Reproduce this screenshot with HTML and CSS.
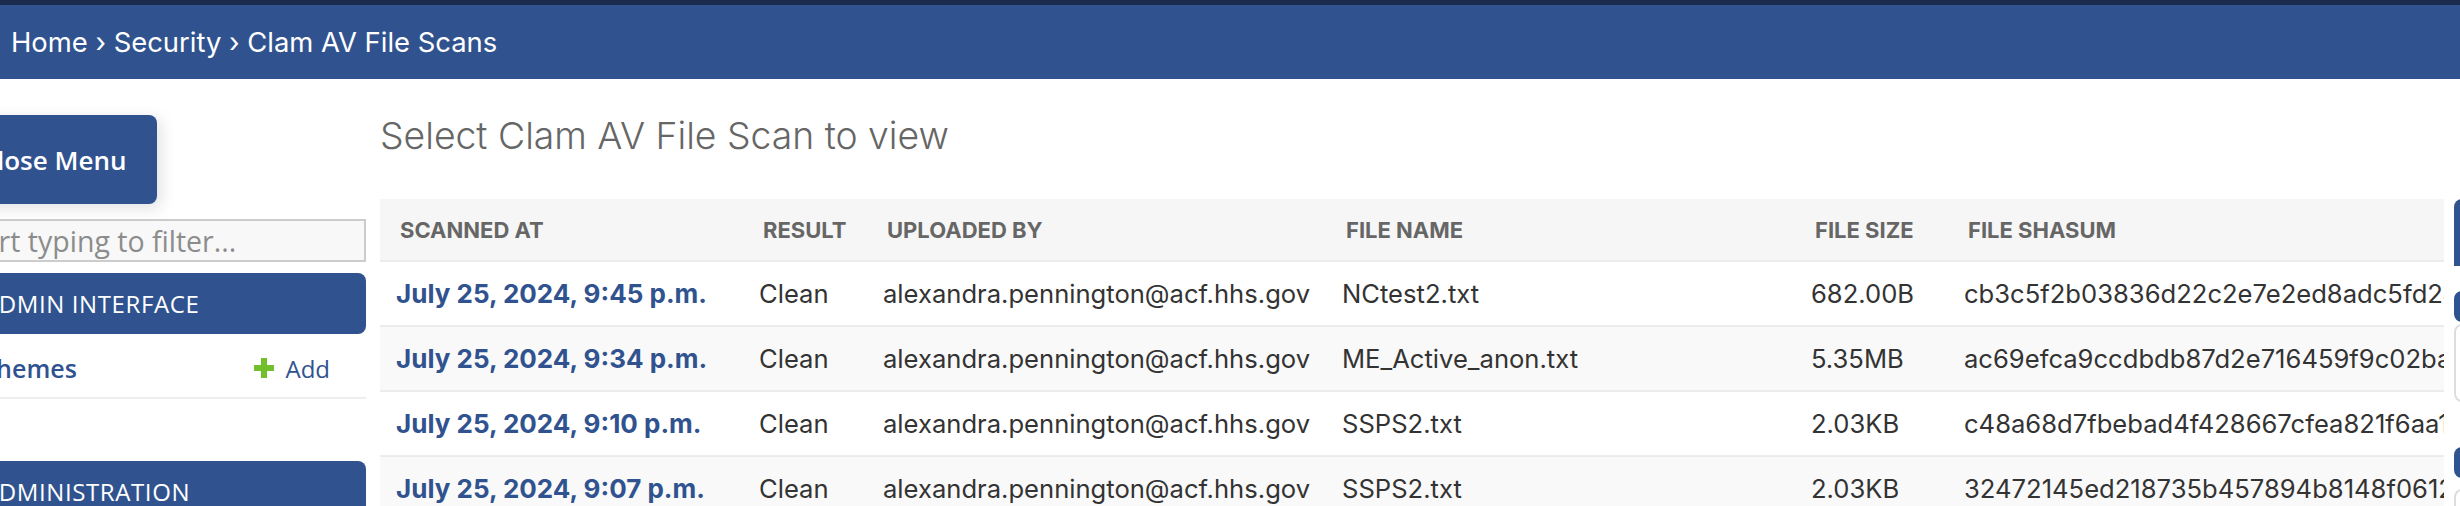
FILE: index.html
```html
<!DOCTYPE html>
<html lang="en">
<head>
<meta charset="utf-8">
<title>Select Clam AV File Scan to view</title>
<link rel="stylesheet" href="styles.css">
</head>
<body>
<div class="header-edge"></div>
<div class="breadcrumbs">Home › Security › Clam AV File Scans</div>
<div class="main">
  <nav class="sidebar">
    <button class="toggle">Close Menu</button>
    <input class="nav-filter" type="text" placeholder="Start typing to filter...">
    <div class="module">
      <div class="caption">Admin Interface</div>
      <div class="model-row">
        <a class="model-link" href="#">Themes</a>
        <a class="addlink" href="#"><svg class="plus" viewBox="0 0 20 20" width="20" height="20"><path d="M7 0h6v7h7v6h-7v7H7v-7H0V7h7z" fill="#70bf2b"/></svg>Add</a>
      </div>
    </div>
    <div class="module">
      <div class="caption">Administration</div>
    </div>
  </nav>
  <div class="content">
    <h1 class="title">Select Clam AV File Scan to view</h1>
    <div class="changelist">
      <div class="results">
        <table class="result-list">
          <colgroup>
            <col class="c1"><col class="c2"><col class="c3"><col class="c4"><col class="c5"><col class="c6">
          </colgroup>
          <thead>
            <tr><th>Scanned at</th><th>Result</th><th>Uploaded by</th><th>File name</th><th>File size</th><th>File shasum</th></tr>
          </thead>
          <tbody>
            <tr><td><a class="rowlink" href="#">July 25, 2024, 9:45 p.m.</a></td><td>Clean</td><td>alexandra.pennington@acf.hhs.gov</td><td>NCtest2.txt</td><td>682.00B</td><td>cb3c5f2b03836d22c2e7e2ed8adc5fd24a1b9e0c7d3f6a2b8e4c1d9f7a3b5e6c</td></tr>
            <tr class="alt"><td><a class="rowlink" href="#">July 25, 2024, 9:34 p.m.</a></td><td>Clean</td><td>alexandra.pennington@acf.hhs.gov</td><td>ME_Active_anon.txt</td><td>5.35MB</td><td>ac69efca9ccdbdb87d2e716459f9c02ba3d1e7f4b6c8a2d5e9f0b1c3a7d4e6f8</td></tr>
            <tr><td><a class="rowlink" href="#">July 25, 2024, 9:10 p.m.</a></td><td>Clean</td><td>alexandra.pennington@acf.hhs.gov</td><td>SSPS2.txt</td><td>2.03KB</td><td>c48a68d7fbebad4f428667cfea821f6aa1e3b5d7c9f2a4e6b8d0c1f3a5e7b9d2</td></tr>
            <tr class="alt"><td><a class="rowlink" href="#">July 25, 2024, 9:07 p.m.</a></td><td>Clean</td><td>alexandra.pennington@acf.hhs.gov</td><td>SSPS2.txt</td><td>2.03KB</td><td>32472145ed218735b457894b8148f0612c4e6a8b0d2f4a6c8e0b2d4f6a8c0e2b</td></tr>
          </tbody>
        </table>
      </div>
      <div class="filter-panel">
        <div class="f-head"></div>
        <div class="f-sub"></div>
        <div class="f-box"></div>
        <div class="f-sub f-sub2"></div>
        <div class="f-box f-box2"></div>
      </div>
    </div>
  </div>
</div>
</body>
</html>
```
FILE: styles.css
```css
html, body {
  margin: 0;
  padding: 0;
  background: #fff;
  overflow: hidden;
}
body {
  width: 2460px;
  height: 506px;
  font-family: "Inter", "Roboto", "Liberation Sans", sans-serif;
  color: #333;
}
.header-edge {
  height: 5px;
  background: #1b2b4d;
}
.breadcrumbs {
  height: 74px;
  background: #30538f;
  color: #fff;
  font-size: 27.4px;
  padding-left: 11px;
  display: flex;
  align-items: center;
}
.main {
  display: flex;
  margin-left: -50px;
}
.sidebar {
  flex: 0 0 416px;
  width: 416px;
  display: flex;
  flex-direction: column;
  font-family: "Open Sans", "DejaVu Sans", sans-serif;
}
.toggle {
  margin-top: 36px;
  width: 207px;
  height: 89px;
  background: #30538f;
  color: #fff;
  border: none;
  border-radius: 8px;
  font-family: "Open Sans", sans-serif;
  font-size: 26px;
  font-weight: 600;
  text-align: center;
  padding: 0;
  box-shadow: 4px 4px 16px rgba(0, 0, 0, 0.12);
}
.nav-filter {
  margin-top: 15px;
  height: 43px;
  box-sizing: border-box;
  width: 416px;
  border: 2px solid #cccccc;
  background: #f8f8f8;
  padding: 0 5px;
  font-family: "Open Sans", sans-serif;
  font-size: 28.5px;
  color: #333;
}
.nav-filter::placeholder {
  color: #8c8c8c;
}
.module {
  margin-top: 11px;
  display: flex;
  flex-direction: column;
}
.module + .module {
  margin-top: 62px;
}
.caption {
  height: 61px;
  background: #30538f;
  border-radius: 8px;
  color: #fff;
  font-size: 24px;
  text-transform: uppercase;
  letter-spacing: 0.6px;
  padding-left: 33px;
  display: flex;
  align-items: center;
}
.model-row {
  border-bottom: 2px solid #eeeeee;
  display: flex;
  align-items: center;
  justify-content: space-between;
  padding: 5px 36px 0 32px;
  box-sizing: border-box;
  height: 65px;
}
.model-link {
  color: #30538f;
  font-weight: 600;
  font-size: 25px;
  text-decoration: none;
}
.addlink {
  color: #30538f;
  font-size: 24px;
  text-decoration: none;
  display: flex;
  align-items: center;
  gap: 11px;
}
.plus {
  display: block;
}
.content {
  flex: 1;
  margin-left: 14px;
  min-width: 0;
}
.title {
  margin: 0 0 40px 0;
  padding-top: 34px;
  line-height: 46px;
  font-size: 37.3px;
  font-weight: 300;
  color: #666;
}
.changelist {
  display: flex;
  gap: 10px;
}
.results {
  width: 2064px;
  flex: 0 0 2064px;
  overflow: hidden;
}
.result-list {
  border-collapse: collapse;
  table-layout: fixed;
  width: 2560px;
}
.c1 { width: 363px; }
.c2 { width: 124px; }
.c3 { width: 459px; }
.c4 { width: 469px; }
.c5 { width: 153px; }
.c6 { width: 992px; }
.result-list th {
  height: 61px;
  padding: 0 0 0 20px;
  text-align: left;
  background: #f6f6f6;
  border-bottom: 2px solid #ececec;
  color: #666;
  font-size: 22px;
  font-weight: 700;
  text-transform: uppercase;
  white-space: nowrap;
}
.result-list td {
  height: 63px;
  padding: 0 0 0 16px;
  border-bottom: 2px solid #ececec;
  font-size: 25.6px;
  color: #333;
  white-space: nowrap;
  overflow: hidden;
  vertical-align: middle;
}
.result-list tr.alt td {
  background: #f9f9f9;
}
.rowlink {
  color: #30538f;
  font-weight: 700;
  font-size: 26px;
  text-decoration: none;
}
.filter-panel {
  flex: 0 0 300px;
  display: flex;
  flex-direction: column;
}
.f-head {
  height: 67px;
  background: #30538f;
  border-radius: 8px 8px 0 0;
}
.f-sub {
  margin-top: 25px;
  height: 31px;
  background: #30538f;
  border-radius: 8px;
}
.f-box {
  margin-top: 2px;
  height: 74px;
  border: 2px solid #dddddd;
  border-radius: 8px;
}
.f-sub2 {
  margin-top: 45px;
}
.f-box2 {
  margin-top: 11px;
  height: 100px;
}
```
